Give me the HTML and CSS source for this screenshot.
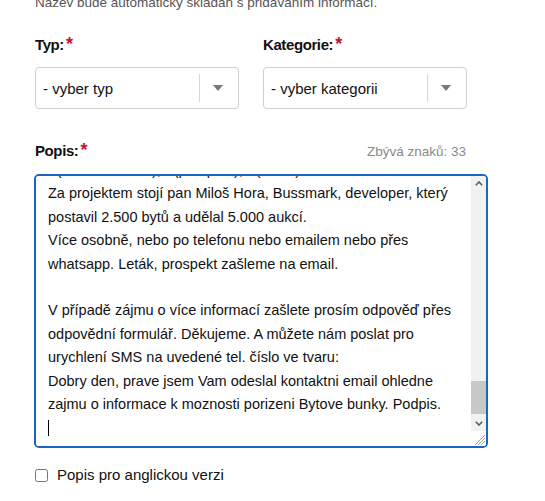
FILE: index.html
```html
<!DOCTYPE html>
<html lang="cs">
<head>
<meta charset="utf-8">
<title>Formulář</title>
<link rel="stylesheet" href="styles.css">
</head>
<body>
<div class="form">
  <p class="hint">Název bude automaticky skládán s přidáváním informací.</p>

  <div class="row">
    <div class="field">
      <label class="label">Typ:<span class="req">*</span></label>
      <div class="select">
        <span class="select-value">- vyber typ</span>
        <span class="select-sep"></span>
        <span class="select-arrow"></span>
      </div>
    </div>
    <div class="field">
      <label class="label">Kategorie:<span class="req">*</span></label>
      <div class="select">
        <span class="select-value">- vyber kategorii</span>
        <span class="select-sep"></span>
        <span class="select-arrow"></span>
      </div>
    </div>
  </div>

  <div class="popis-head">
    <label class="label" for="popis">Popis:<span class="req">*</span></label>
    <span class="counter">Zbývá znaků: 33</span>
  </div>

  <div class="ta-wrap">
    <textarea id="popis" class="textarea">Nabízíme k prodeji moderní bytové buňky v nově budovaném projektu v klidné lokalitě s výbornou dostupností do centra města. Každá bytová buňka je plně vybavena, má vlastní kuchyňský kout, koupelnu se sprchovým koutem a toaletou.

Bytové buňky jsou vhodné jako investice k pronájmu, pro studenty, mladé páry nebo jako sezónní ubytování pro pracovníky. Výnos z pronájmu se pohybuje kolem 6 % ročně.

Projekt zahrnuje společné prostory, parkoviště, úschovnu kol, recepci a zabezpečený vstup s kamerovým systémem. Správu objektu zajišťuje profesionální firma, takže se o nic nemusíte starat.

Cena zahrnuje kompletní vybavení, připojení k internetu a podíl na společných prostorách. Možnost financování hypotékou, případně splátkovým kalendářem přímo od developera.

Dokončení projektu je plánováno na příští rok, stavba již probíhá a můžete si ji kdykoli prohlédnout po předchozí domluvě. Rezervace je možná již nyní, počet jednotek je omezený.

Nabízíme také možnost zpětného odkupu a garantovaného pronájmu po dobu prvních pěti let. Všechny smlouvy jsou připravovány advokátní kanceláří a kupní cena je uložena v úschově.
- (více informací), - (prospekt), - (ceník) -
Za projektem stojí pan Miloš Hora, Bussmark, developer, který postavil 2.500 bytů a udělal 5.000 aukcí.
Více osobně, nebo po telefonu nebo emailem nebo přes whatsapp. Leták, prospekt zašleme na email.

V případě zájmu o více informací zašlete prosím odpověď přes odpovědní formulář. Děkujeme. A můžete nám poslat pro urychlení SMS na uvedené tel. číslo ve tvaru:
Dobry den, prave jsem Vam odeslal kontaktni email ohledne zajmu o informace k moznosti porizeni Bytove bunky. Podpis.
</textarea>
    <span class="caret"></span>
    <div class="sb" aria-hidden="true">
      <div class="sb-btn">
        <svg width="8" height="5" viewBox="0 0 8 5"><polyline points="0.8,4.2 4,1 7.2,4.2" fill="none" stroke="#5a5a5a" stroke-width="1.6"/></svg>
      </div>
      <div class="sb-track">
        <div class="sb-thumb"></div>
      </div>
      <div class="sb-btn">
        <svg width="8" height="5" viewBox="0 0 8 5"><polyline points="0.8,0.8 4,4 7.2,0.8" fill="none" stroke="#5a5a5a" stroke-width="1.6"/></svg>
      </div>
      <div class="sb-corner">
        <svg width="15" height="15" viewBox="0 0 15 15"><path d="M14 4 L4 14 M14 7 L7 14 M14 10 L10 14" stroke="#9a9a9a" stroke-width="1"/></svg>
      </div>
    </div>
  </div>

  <label class="check">
    <input type="checkbox" class="check-box">
    <span>Popis pro anglickou verzi</span>
  </label>
</div>
<script src="script.js"></script>
</body>
</html>
```

FILE: styles.css
```css
html, body {
  margin: 0;
  padding: 0;
  background: #fff;
}

body {
  font-family: "Liberation Sans", Arial, sans-serif;
  color: #111;
}

.form {
  padding-left: 35px;
  width: 454px;
}

.hint {
  margin: -6px 0 0;
  font-size: 13.5px;
  line-height: 18px;
  color: #555;
}

.row {
  display: grid;
  grid-template-columns: 204px 204px;
  column-gap: 24px;
  margin-top: 23px;
}

.label {
  display: block;
  font-weight: bold;
  font-size: 15px;
  letter-spacing: -0.4px;
  line-height: 20px;
  color: #111;
}

.req {
  color: #c8102e;
  margin-left: 2px;
  font-size: 18px;
  line-height: 0;
}

.select {
  margin-top: 12px;
  height: 40px;
  border: 1px solid #cfcfcf;
  border-radius: 4px;
  display: flex;
  align-items: center;
}

.select-value {
  flex: 1;
  padding-left: 7px;
  font-size: 15px;
  color: #111;
}

.select-sep {
  width: 1px;
  height: 28px;
  background: #d6d6d6;
}

.select-arrow {
  width: 0;
  height: 0;
  margin: 0 15px 0 13px;
  border-left: 5px solid transparent;
  border-right: 5px solid transparent;
  border-top: 6px solid #777;
}

.popis-head {
  display: flex;
  justify-content: space-between;
  align-items: baseline;
  width: 431px;
  height: 20px;
  margin-top: 32px;
  line-height: 20px;
}

.counter {
  font-size: 13.5px;
  color: #8a8a8a;
}

.ta-wrap {
  position: relative;
  width: 454px;
  height: 274px;
  margin: 13px 0 0 -1px;
}

.textarea {
  display: block;
  box-sizing: border-box;
  width: 100%;
  height: 100%;
  margin: 0;
  padding: 4px 27px 6px 12px;
  border: 2px solid #1d64c4;
  border-radius: 5px;
  outline: none;
  font-family: "Liberation Sans", Arial, sans-serif;
  font-size: 14.5px;
  line-height: 23.4px;
  color: #111;
  overflow-y: scroll;
  scrollbar-width: none;
  resize: none;
  background: #fff;
}

.textarea::-webkit-scrollbar {
  display: none;
}

.caret {
  position: absolute;
  left: 14px;
  top: 246px;
  width: 1px;
  height: 16px;
  background: #000;
}

.sb {
  position: absolute;
  top: 2px;
  right: 2px;
  bottom: 2px;
  width: 15px;
  display: flex;
  flex-direction: column;
  border-radius: 0 3px 3px 0;
  overflow: hidden;
}

.sb-btn {
  height: 15px;
  flex: none;
  display: flex;
  align-items: center;
  justify-content: center;
  background: #f1f1f1;
}

.sb-track {
  flex: 1;
  display: flex;
  flex-direction: column;
  justify-content: flex-end;
  padding-bottom: 2px;
  background: #f1f1f1;
}

.sb-thumb {
  height: 33px;
  background: #c8c8c8;
}

.sb-corner {
  height: 15px;
  flex: none;
  background: #fff;
}

.sb-corner svg {
  display: block;
}

.check {
  display: flex;
  align-items: center;
  margin-top: 17px;
  font-size: 15px;
  line-height: 20px;
  color: #111;
}

.check-box {
  width: 13px;
  height: 13px;
  margin: 0 9px 0 0;
}
```

FILE: script.js
```js
var ta = document.getElementById('popis');
var end = ta.value.length;
ta.setSelectionRange(end, end);
ta.scrollTop = ta.scrollHeight;
```
